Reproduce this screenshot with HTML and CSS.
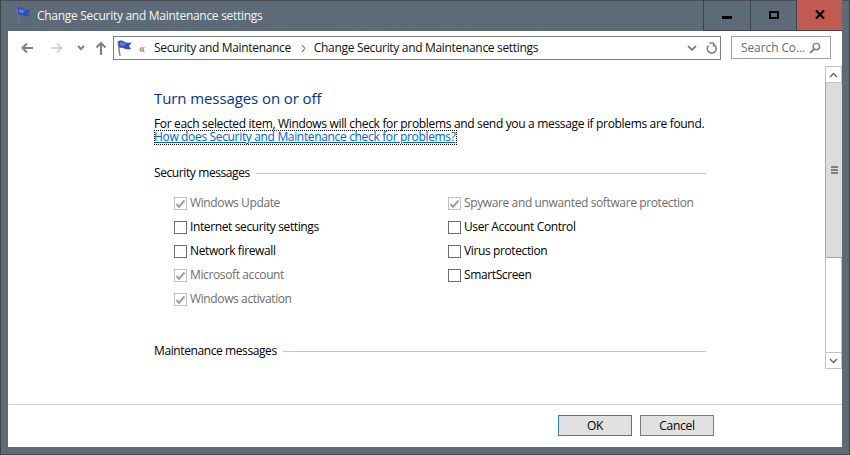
FILE: index.html
```html
<!DOCTYPE html>
<html lang="en">
<head>
<meta charset="utf-8">
<title>Change Security and Maintenance settings</title>
<link rel="stylesheet" href="styles.css">
</head>
<body>
<div class="window">
  <header class="titlebar">
    <svg class="flag title-flag" width="18" height="18" viewBox="0 0 18 18"><path d="M2 2 L4 17" stroke="#6d7684" stroke-width="1.4" fill="none"/><path d="M2.5 2 C5 1 7 2 9 3 C11 4 13 4 16 3.5 L13 7 L15 10 C12 11 9 10 7 9 C6 8.500 4.500 8.500 3.300 9 Z" fill="#2f4fc0"/><path d="M4 3 C6 3 8 4 10 5 L8 7 L4 6 Z" fill="#5f7fe6"/></svg>
    <span class="title-text">Change Security and Maintenance settings</span>
    <div class="caption">
      <div class="cap-btn cap-min"><span class="min-glyph"></span></div>
      <div class="cap-btn cap-max"><span class="max-glyph"></span></div>
      <div class="cap-btn cap-close"><svg width="10" height="9" viewBox="0 0 10 9"><path d="M1 .5 L9 8.500 M9 .5 L1 8.500" stroke="#000" stroke-width="2.200" fill="none"/></svg></div>
    </div>
  </header>
  <div class="client">
    <nav class="toolbar">
      <div class="nav-buttons">
        <svg class="nav-back" width="12" height="12" viewBox="0 0 12 12"><path d="M12 6 H1.500 M6 1.500 L1.500 6 L6 10.500" stroke="#7f7f7f" stroke-width="2" fill="none"/></svg>
        <svg class="nav-forward" width="12" height="12" viewBox="0 0 12 12"><path d="M0 6 H10.500 M6 1.500 L10.500 6 L6 10.500" stroke="#d6d6d6" stroke-width="2" fill="none"/></svg>
        <svg class="nav-drop" width="8" height="6" viewBox="0 0 8 6"><path d="M1 1 L4 4 L7 1" stroke="#7f7f7f" stroke-width="2" fill="none"/></svg>
        <svg class="nav-up" width="12" height="14" viewBox="0 0 12 14"><path d="M6 14 V2 M1.500 6.500 L6 2 L10.500 6.500" stroke="#7f7f7f" stroke-width="2" fill="none"/></svg>
      </div>
      <div class="address">
        <svg class="flag" width="18" height="18" viewBox="0 0 18 18"><path d="M2 2 L4 17" stroke="#7a7f8a" stroke-width="1.400" fill="none"/><path d="M2.500 2 C5 1 7 2 9 3 C11 4 13 4 16 3.500 L13 7 L15 10 C12 11 9 10 7 9 C6 8.500 4.500 8.500 3.300 9 Z" fill="#2f4fc0"/><path d="M4 3 C6 3 8 4 10 5 L8 7 L4 6 Z" fill="#5f7fe6"/></svg>
        <span class="crumb-chevrons">«</span>
        <span class="crumb crumb-one">Security and Maintenance</span>
        <svg class="crumb-sep" width="5" height="7" viewBox="0 0 5 7"><path d="M1 0 L4 3.500 L1 7" stroke="#555" stroke-width="1" fill="none"/></svg>
        <span class="crumb crumb-two">Change Security and Maintenance settings</span>
        <span class="address-spacer"></span>
        <svg class="addr-drop" width="10" height="7" viewBox="0 0 10 7"><path d="M1 1 L5 5 L9 1" stroke="#7f7f7f" stroke-width="1.800" fill="none"/></svg>
        <svg class="addr-refresh" width="12" height="13" viewBox="0 0 12 13"><path d="M7.500 2.500 A4.500 4.500 0 1 1 2.500 3.500" stroke="#7f7f7f" stroke-width="1.600" fill="none"/><path d="M2 1 L6 1 L6 4.500" stroke="#7f7f7f" stroke-width="1.400" fill="none" transform="translate(1.500 0)"/></svg>
      </div>
      <div class="search">
        <span class="search-text">Search Co...</span>
        <svg width="12" height="12" viewBox="0 0 13 13"><circle cx="8" cy="5" r="3.500" stroke="#7f7f7f" stroke-width="1.600" fill="none"/><path d="M5.500 7.500 L1 12" stroke="#7f7f7f" stroke-width="2" fill="none"/></svg>
      </div>
    </nav>
    <div class="body-row">
      <main class="content">
        <h1 class="heading">Turn messages on or off</h1>
        <p class="intro">For each selected item, Windows will check for problems and send you a message if problems are found.</p>
        <a class="help-link" href="#">How does Security and Maintenance check for problems?</a>
        <div class="group-head security-head"><span>Security messages</span><i class="rule"></i></div>
        <div class="checks">
          <div class="check-col">
            <div class="check disabled"><span class="box checked"><svg width="11" height="10" viewBox="0 0 11 10"><path d="M1.500 5 L4 8 L9.500 1.500" stroke="#a0a0a0" stroke-width="2" fill="none"/></svg></span>Windows Update</div>
            <div class="check"><span class="box"></span>Internet security settings</div>
            <div class="check"><span class="box"></span>Network firewall</div>
            <div class="check disabled"><span class="box checked"><svg width="11" height="10" viewBox="0 0 11 10"><path d="M1.500 5 L4 8 L9.500 1.500" stroke="#a0a0a0" stroke-width="2" fill="none"/></svg></span>Microsoft account</div>
            <div class="check disabled"><span class="box checked"><svg width="11" height="10" viewBox="0 0 11 10"><path d="M1.500 5 L4 8 L9.500 1.500" stroke="#a0a0a0" stroke-width="2" fill="none"/></svg></span>Windows activation</div>
          </div>
          <div class="check-col">
            <div class="check disabled"><span class="box checked"><svg width="11" height="10" viewBox="0 0 11 10"><path d="M1.500 5 L4 8 L9.500 1.500" stroke="#a0a0a0" stroke-width="2" fill="none"/></svg></span>Spyware and unwanted software protection</div>
            <div class="check"><span class="box"></span>User Account Control</div>
            <div class="check"><span class="box"></span>Virus protection</div>
            <div class="check"><span class="box"></span>SmartScreen</div>
          </div>
        </div>
        <div class="group-head maintenance-head"><span>Maintenance messages</span><i class="rule"></i></div>
      </main>
      <div class="scrollbar">
        <div class="sb-btn sb-up"><svg width="9" height="6" viewBox="0 0 9 6"><path d="M1 5 L4.500 1.500 L8 5" stroke="#606060" stroke-width="1.300" fill="none"/></svg></div>
        <div class="sb-thumb"><i></i><i></i><i></i></div>
        <div class="sb-track"></div>
        <div class="sb-btn sb-down"><svg width="9" height="6" viewBox="0 0 9 6"><path d="M1 1 L4.500 4.500 L8 1" stroke="#606060" stroke-width="1.300" fill="none"/></svg></div>
      </div>
    </div>
    <footer class="footer">
      <button class="btn btn-default">OK</button>
      <button class="btn">Cancel</button>
    </footer>
  </div>
</div>
</body>
</html>
```
FILE: styles.css
```css
* { box-sizing: border-box; }
html, body { margin: 0; padding: 0; }
body {
  width: 850px;
  height: 455px;
  overflow: hidden;
  font-family: "Open Sans", "Noto Sans", sans-serif;
  font-size: 12px;
  color: #000;
}
.window {
  width: 850px;
  height: 455px;
  display: flex;
  flex-direction: column;
  background: #5d6a77;
  border: 1px solid #3f4246;
  border-top-color: #4a4d52;
  border-bottom: 1px solid #44474b;
  padding: 0 7px 7px;
}
.titlebar {
  height: 30px;
  flex: none;
  display: flex;
  align-items: center;
  color: #fff;
}
.title-flag { margin: 0 0 0 7px; position: relative; top: -1px; }
.title-text { margin-left: 4px; font-size: 12px; letter-spacing: -.29px; color: #f4f6f8; position: relative; top: -1px; }
.caption {
  margin-left: auto;
  display: flex;
  align-self: flex-start;
  margin-top: -1px;
  height: 31px;
  border-bottom: 1px solid #3f4246;
  border-left: 1px solid #3f4246;
}
.cap-btn { display: flex; align-items: center; justify-content: center; height: 30px; }
.cap-min { width: 47px; border-right: 1px solid #3f4246; }
.cap-max { width: 46px; border-right: 1px solid #3f4246; }
.cap-close { width: 45px; background: #c15a50; }
.min-glyph { width: 10px; height: 3px; background: #000; margin-top: 4px; }
.max-glyph { width: 10px; height: 8px; border: 2px solid #000; margin-top: -1px; }
.cap-close svg { margin-top: -1px; }
.client {
  flex: 1;
  min-height: 0;
  background: #fff;
  display: flex;
  flex-direction: column;
}
.toolbar {
  height: 35px;
  flex: none;
  display: flex;
  align-items: flex-start;
  padding-top: 5px;
}
.nav-buttons {
  width: 105px;
  height: 24px;
  flex: none;
  display: flex;
  align-items: center;
  padding-left: 13px;
}
.nav-forward { margin-left: 18px; }
.nav-drop { margin-left: 14px; }
.nav-up { margin-left: 10px; }
.address {
  width: 608px;
  height: 24px;
  flex: none;
  border: 1px solid #7f7f7f;
  display: flex;
  align-items: center;
  padding-left: 2px;
}
.crumb-chevrons { margin-left: 5px; width: 15px; color: #666; font-size: 12px; }
.crumb { color: #111; padding-bottom: 2px; }
.crumb-one { letter-spacing: -.34px; }
.crumb-two { letter-spacing: -.32px; }
.crumb-sep { margin: 0 8px 0 10px; }
.address-spacer { flex: 1; }
.addr-drop { margin-right: 9px; }
.addr-refresh { margin-right: 2px; }
.search {
  width: 100px;
  height: 23px;
  flex: none;
  margin-left: 10px;
  border: 1px solid #a0a0a0;
  display: flex;
  align-items: center;
  justify-content: space-between;
  padding: 0 9px 0 9px;
  color: #6d6d6d;
  letter-spacing: -.1px;
}
.body-row { flex: 1; min-height: 0; display: flex; }
.content {
  flex: 1;
  min-width: 0;
  padding: 0 119px 0 146px;
  overflow: hidden;
}
.heading {
  margin: 22px 0 0;
  font-size: 15px;
  font-weight: 400;
  line-height: 20px;
  letter-spacing: -.09px;
  color: #003399;
}
.intro { margin: 9px 0 0; height: 13px; line-height: 14px; letter-spacing: -.33px; white-space: nowrap; }
.help-link {
  display: block;
  width: 303px;
  height: 15px;
  line-height: 14px;
  color: #0066cc;
  text-decoration: underline;
  outline: 1px dotted #000;
  outline-offset: -1px;
  letter-spacing: -.34px;
  white-space: nowrap;
}
.group-head { display: flex; align-items: center; gap: 6px; line-height: 16px; letter-spacing: -.4px; }
.security-head { margin-top: 20px; }
.maintenance-head { margin-top: 33px; }
.rule { flex: 1; height: 1px; background: #c4c4c4; }
.checks { display: flex; margin-top: 9px; padding-left: 20px; }
.check-col { width: 275px; flex: none; display: flex; flex-direction: column; }
.check-col:first-child { width: 274px; }
.check { height: 24px; display: flex; align-items: center; letter-spacing: -.38px; white-space: nowrap; }
.box {
  width: 13px;
  height: 13px;
  flex: none;
  margin: 3px 3px 0 0;
  border: 1px solid #6e6e6e;
  background: #fff;
  display: flex;
  align-items: center;
  justify-content: center;
}
.box.checked { border-color: #c2c2c2; }
.check.disabled { color: #6d6d6d; }
.scrollbar {
  width: 17px;
  flex: none;
  display: flex;
  flex-direction: column;
  height: 303px;
}
.sb-btn { height: 17px; flex: none; border: 1px solid #c2c2c2; display: flex; align-items: center; justify-content: center; background: #fff; }
.sb-thumb {
  height: 175px;
  flex: none;
  background: #dcdcdc;
  border-left: 1px solid #a8a8a8;
  border-bottom: 1px solid #a8a8a8;
  display: flex;
  flex-direction: column;
  align-items: center;
  justify-content: center;
  gap: 1px;
}
.sb-thumb i { width: 7px; height: 2px; background: #7f7f7f; }
.sb-track { flex: 1; border-left: 1px solid #c2c2c2; border-right: 1px solid #c2c2c2; }
.footer {
  height: 43px;
  flex: none;
  border-top: 1px solid #d0d0d0;
  display: flex;
  justify-content: flex-end;
  align-items: flex-start;
  gap: 8px;
  padding: 10px 128px 0 0;
}
.btn {
  width: 74px;
  height: 21px;
  padding: 0;
  font: inherit;
  letter-spacing: -.3px;
  line-height: 17px;
  background: #e1e1e1;
  border: 1px solid #7a7a7a;
  color: #000;
}
.btn-default { border-color: #2f7fb8; }
```
